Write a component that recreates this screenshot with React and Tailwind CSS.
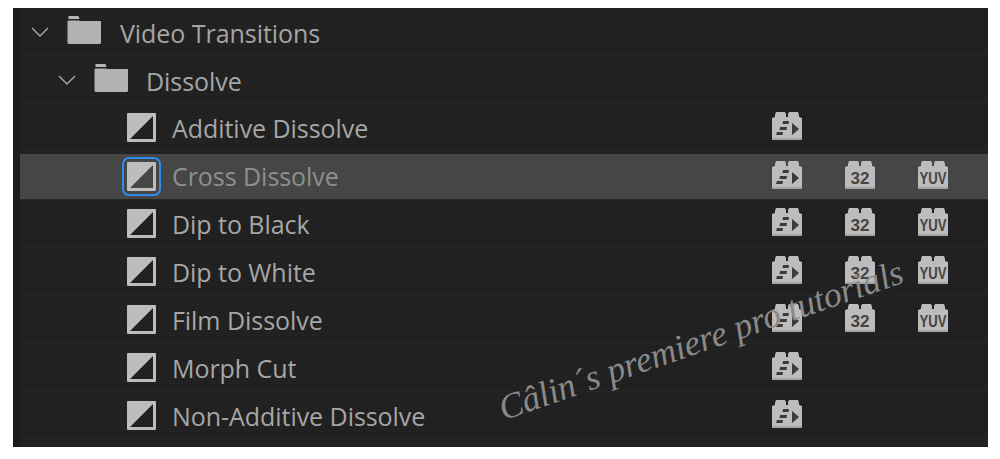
const effects = [
  { name: 'Additive Dissolve', badges: ['accel'] },
  { name: 'Cross Dissolve', badges: ['accel', '32', 'YUV'], selected: true },
  { name: 'Dip to Black', badges: ['accel', '32', 'YUV'] },
  { name: 'Dip to White', badges: ['accel', '32', 'YUV'] },
  { name: 'Film Dissolve', badges: ['accel', '32', 'YUV'] },
  { name: 'Morph Cut', badges: ['accel'] },
  { name: 'Non-Additive Dissolve', badges: ['accel'] },
];

function Chevron() {
  return (
    <svg width="18" height="10" viewBox="0 0 18 10" fill="none" stroke="#a8a8a8" strokeWidth="1.4">
      <path d="M1 1l8 8 8-8" />
    </svg>
  );
}

function Folder() {
  return (
    <svg width="34" height="28" viewBox="0 0 34 28" className="block">
      <path d="M1.500 0h10l1 3h-11z" fill="#b5b5b5" />
      <path d="M1 4.500h11l1 .5h21v22l-1 1H1.500L.5 27V5z" fill="#b2b2b2" />
    </svg>
  );
}

function EffectIcon({ bg }) {
  return (
    <svg width="29" height="29" viewBox="0 0 29 29" className="block">
      <rect width="29" height="29" rx="1" fill="#bdbdbd" />
      <path d="M3 26L26 3v23z" fill={bg} />
    </svg>
  );
}

function Badge({ kind }) {
  return (
    <svg width="30" height="28" viewBox="0 0 30 28" className="block">
      <path d="M4 0h9l1 2v3h2V2l1-2h9l1 3v2l3 1v22H0V6l3-1V3z" fill="#bcbcbc" />
      <path d="M0 26h30v2H0z" fill="#a4a4a4" />
      {kind === 'accel' ? (
        <g fill="#3a3a3a">
          <path d="M20 11l7 6-7 6z" />
          <path d="M11 9h6l-.5 3h-6zM8 15h7l-.5 3h-7zM5 20h6l-.5 3H4z" />
        </g>
      ) : (
        <text
          x="15"
          y="23"
          textAnchor="middle"
          fill="#444444"
          fontFamily="'Liberation Sans', sans-serif"
          fontWeight="700"
          fontSize="17"
          textLength={kind === 'YUV' ? 27 : 19}
          lengthAdjust="spacingAndGlyphs"
        >
          {kind}
        </text>
      )}
    </svg>
  );
}

export default function App() {
  return (
    <div className="h-[459px] w-[1000px] overflow-hidden bg-white pl-[13px] pt-2 font-['Open_Sans',sans-serif]">
      <div className="relative flex h-[439px] w-[975px] overflow-hidden bg-[#212121]">
        <div className="w-[7px] shrink-0 bg-[#1c1c1c]" />
        <div className="flex-1">
          {/* Folder rows */}
          <div className="flex h-12 items-center border-b border-[#272727] pl-[11px] text-[25px] text-[#a6a6a6]">
            <Chevron />
            <div className="mb-[3px] ml-[18px] mr-[19px]"><Folder /></div>
            <span className="pt-1 tracking-[-0.05px]">Video Transitions</span>
          </div>
          <div className="flex h-12 items-center border-b border-[#272727] pl-[38px] text-[25px] text-[#a6a6a6]">
            <Chevron />
            <div className="mb-[3px] ml-[18px] mr-[18px]"><Folder /></div>
            <span className="pt-1 tracking-[-0.05px]">Dissolve</span>
          </div>

          {/* Effect rows */}
          {effects.map((effect) => (
            <div key={effect.name} className="h-12 border-b border-[#272727]">
              <div
                className={`flex h-full items-center pl-[107px] ${
                  effect.selected ? 'border-t-2 border-[#212121] bg-[#464646] text-[#8f8f8f]' : 'text-[#a6a6a6]'
                }`}
              >
                <div className={effect.selected ? 'rounded-[2px] outline-2 outline-offset-[3px] outline-[#2d8ceb]' : ''}>
                  <EffectIcon bg={effect.selected ? '#464646' : '#212121'} />
                </div>
                <span className={`ml-4 w-[600px] text-[25px] tracking-[-0.05px] ${effect.selected ? 'pt-px' : 'pt-[2px]'}`}>
                  {effect.name}
                </span>
                <div className="mb-1 flex gap-[43px]">
                  {effect.badges.map((kind) => (
                    <Badge key={kind} kind={kind} />
                  ))}
                </div>
              </div>
            </div>
          ))}
        </div>

        {/* Watermark */}
        <span className="absolute left-[487px] top-[384px] origin-left -rotate-[19deg] whitespace-nowrap font-['Liberation_Serif',serif] text-[35.5px] italic leading-none text-[#8a8a8a]">
          Câlin´s premiere pro tutorials
        </span>
      </div>
    </div>
  );
}
